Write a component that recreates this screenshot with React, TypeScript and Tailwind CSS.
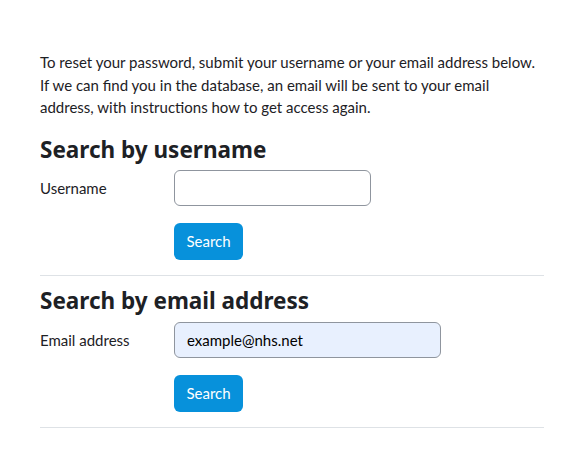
export default function App() {
  return (
    <div
      className="min-h-screen bg-white px-[40px] pt-[51px] text-[#1d2125]"
      style={{ fontFamily: 'Lato, "Noto Sans", sans-serif' }}
    >
      <div className="w-[504px]">
        <p className="mb-[17px] text-[15px] leading-[22.5px]">
          To reset your password, submit your username or your email address
          below. If we can find you in the database, an email will be sent to
          your email address, with instructions how to get access again.
        </p>

        {/* username */}
        <h3 className="mb-[7.5px] font-['Noto_Sans',sans-serif] text-[22.5px] font-bold leading-[27px]">
          Search by username
        </h3>
        <div className="flex items-center">
          <label className="w-[134px] text-[15px]">Username</label>
          <input
            type="text"
            className="h-[36px] w-[197px] rounded-[6px] border border-[#8f959e] bg-white px-3 text-[15px] outline-none"
          />
        </div>
        <div className="mt-[17px] pl-[134px]">
          <button className="h-[37px] w-[69px] rounded-[6px] bg-[#0791db] text-[15px] text-white">
            Search
          </button>
        </div>
        <hr className="mt-[15px] border-t border-[#dee2e6]" />

        {/* email */}
        <h3 className="mt-[10.5px] mb-[8.5px] font-['Noto_Sans',sans-serif] text-[22.5px] font-bold leading-[27px]">
          Search by email address
        </h3>
        <div className="flex items-center">
          <label className="w-[134px] text-[15px]">Email address</label>
          <input
            type="text"
            defaultValue="example@nhs.net"
            className="h-[36px] w-[267px] rounded-[6px] border border-[#8f959e] bg-[#e8f0fe] px-3 text-[15px] text-black outline-none"
          />
        </div>
        <div className="mt-[17px] pl-[134px]">
          <button className="h-[37px] w-[69px] rounded-[6px] bg-[#0791db] text-[15px] text-white">
            Search
          </button>
        </div>
        <hr className="mt-[15px] border-t border-[#dee2e6]" />
      </div>
    </div>
  );
}
